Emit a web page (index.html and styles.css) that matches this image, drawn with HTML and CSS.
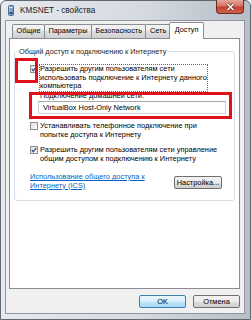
FILE: index.html
```html
<!DOCTYPE html>
<html lang="ru">
<head>
<meta charset="UTF-8">
<title>KMSNET - свойства</title>
<link rel="stylesheet" href="styles.css">
</head>
<body>

<div class="window">
  <div class="titlebar">
    <svg class="app-icon" width="6" height="11" viewBox="0 0 6 11">
      <defs>
        <linearGradient id="ico" x1="0" y1="0" x2="1" y2="0">
          <stop offset="0" stop-color="#9fc3e6"/>
          <stop offset="1" stop-color="#5d8dbd"/>
        </linearGradient>
      </defs>
      <rect x="0.5" y="0.5" width="5" height="10" rx="1" fill="url(#ico)" stroke="#4f6f92"/>
      <rect x="1.5" y="2" width="3" height="1" fill="#e6f2fc"/>
      <rect x="1.5" y="7" width="3" height="2" fill="#2e4f75"/>
    </svg>
    <span class="title">KMSNET - свойства</span>
    <div class="close">
      <svg width="9" height="8" viewBox="0 0 9 8">
        <path d="M1.5 1 L7.5 7 M7.5 1 L1.5 7" stroke="#5a2720" stroke-width="2.8"/>
        <path d="M1.5 1 L7.5 7 M7.5 1 L1.5 7" stroke="#fff" stroke-width="1.6"/>
      </svg>
    </div>
  </div>

  <div class="client">
    <div class="tabs">
      <div class="tab">Общие</div>
      <div class="tab">Параметры</div>
      <div class="tab">Безопасность</div>
      <div class="tab">Сеть</div>
      <div class="tab active">Доступ</div>
    </div>

    <div class="panel">
      <fieldset class="group">
        <legend>Общий доступ к подключению к Интернету</legend>

        <div class="option">
          <span class="checkbox">
            <svg width="6" height="6" viewBox="0 0 6 6"><path d="M0.8 3 L2.3 4.8 L5.3 0.8" fill="none" stroke="#3d4f86" stroke-width="1.3"/></svg>
          </span>
          <span class="option-text focus narrow">Разрешить другим пользователям сети использовать подключение к Интернету данного компьютера</span>
        </div>

        <div class="home-net">
          <div class="field-label">Подключение домашней сети:</div>
          <div class="field">VirtualBox Host-Only Network</div>
        </div>

        <div class="option option-gap">
          <span class="checkbox"></span>
          <span class="option-text">Устанавливать телефонное подключение при попытке доступа к Интернету</span>
        </div>

        <div class="option option-gap-small">
          <span class="checkbox">
            <svg width="6" height="6" viewBox="0 0 6 6"><path d="M0.8 3 L2.3 4.8 L5.3 0.8" fill="none" stroke="#3d4f86" stroke-width="1.3"/></svg>
          </span>
          <span class="option-text">Разрешить другим пользователям сети управление общим доступом к подключению к Интернету</span>
        </div>

        <div class="link-row">
          <a class="link" href="#">Использование общего доступа к Интернету (ICS)</a>
          <button class="btn settings">Настройка...</button>
        </div>
      </fieldset>
    </div>

    <div class="buttons">
      <button class="btn default">OK</button>
      <button class="btn">Отмена</button>
    </div>
  </div>

  <!-- red highlight frames from the screenshot -->
  <div class="mark mark-check"></div>
  <div class="mark mark-field"></div>
</div>

</body>
</html>
```

FILE: styles.css
```css
* {
  box-sizing: border-box;
}
body {
  margin: 0;
  width: 251px;
  height: 320px;
  overflow: hidden;
  font-family: "Liberation Sans", Arial, sans-serif;
  font-size: 7.4px;
  color: #000;
}
.window {
  position: relative;
  width: 251px;
  height: 320px;
  display: flex;
  flex-direction: column;
  padding: 0 5px 5px 4px;
  border: 1px solid #5f666e;
  border-radius: 6px 6px 0 0;
  background: linear-gradient(to right, #e6e9ed, #d6dbe1 55%, #b6bec7);
}
.titlebar {
  height: 19px;
  display: flex;
  align-items: center;
}
.app-icon {
  margin-left: 3px;
  flex: none;
}
.title {
  margin-left: 6px;
  font-size: 8.2px;
  color: #1b1b1b;
}
.close {
  margin-left: auto;
  margin-right: 1px;
  align-self: flex-start;
  margin-top: -1px;
  width: 28px;
  height: 14px;
  display: flex;
  align-items: center;
  justify-content: center;
  border: 1px solid #6b2a22;
  border-top: none;
  border-radius: 0 0 4px 4px;
  background: linear-gradient(#e4a89c, #d47363 45%, #c0412f 55%, #d0614a);
}
.client {
  flex: 1;
  display: flex;
  flex-direction: column;
  padding: 0 4px 0 3px;
  border: 1px solid #8f98a1;
  background: #f0f0f0;
}
.tabs {
  height: 17px;
  display: flex;
  align-items: flex-end;
  padding-left: 3px;
  font-size: 7.3px;
}
.tab {
  height: 14px;
  padding: 0 3.5px;
  margin-right: -1px;
  line-height: 12px;
  border: 1px solid #898c95;
  border-bottom: none;
  border-radius: 2px 2px 0 0;
  background: linear-gradient(#f3f3f3, #ebebeb 50%, #dedede 50%, #d0d0d0);
}
.tab.active {
  position: relative;
  z-index: 1;
  height: 17px;
  margin: 0 0 -1px -1px;
  padding: 0 5px;
  line-height: 14px;
  background: #fff;
}
.panel {
  flex: 1;
  padding: 0 4px;
  background: #fff;
  border: 1px solid #898c95;
}
.group {
  margin: 8px 0 0;
  padding: 8px 12px 10px 15px;
  min-width: 0;
  border: 1px solid #d5dfe5;
  border-radius: 3px;
}
.group legend {
  padding: 0 1px;
  margin-left: -12px;
  line-height: 9px;
  color: #1e1e1e;
}
.option {
  display: flex;
  align-items: flex-start;
  line-height: 8.5px;
}
.option-gap {
  margin-top: 7px;
}
.option-gap-small {
  margin-top: 5px;
}
.checkbox {
  flex: none;
  width: 8px;
  height: 8px;
  margin: 1px 1px 0 0;
  display: flex;
  align-items: center;
  justify-content: center;
  border: 1px solid #8e8f8f;
  background: linear-gradient(135deg, #dedede, #fbfbfb);
}
.option-text {
  border: 1px dotted transparent;
  width: 186px;
}
.option-text.narrow {
  width: 169px;
}
.option-text.focus {
  border-color: #666;
}
.home-net {
  margin-left: 8px;
  line-height: 8.5px;
}
.field-label {
  padding-left: 2px;
}
.field {
  width: 188px;
  height: 13px;
  margin-top: 1px;
  padding-left: 4px;
  line-height: 11px;
  border: 1px solid #c9cfd6;
  border-top-color: #a4a9b1;
}
.link-row {
  display: flex;
  justify-content: space-between;
  align-items: flex-start;
  margin-top: 9px;
  line-height: 8.5px;
}
.link {
  width: 122px;
  color: #0a62c4;
}
.btn {
  height: 13px;
  padding: 0;
  font-family: inherit;
  font-size: inherit;
  line-height: 11px;
  color: #000;
  border: 1px solid #707070;
  border-radius: 2px;
  background: linear-gradient(#f2f2f2, #ebebeb 50%, #dddddd 50%, #cfcfcf);
}
.btn.settings {
  width: 48px;
  margin-top: 3px;
}
.buttons {
  display: flex;
  justify-content: flex-end;
  gap: 7px;
  padding: 6px 0 5px;
}
.buttons .btn {
  width: 47px;
}
.btn.default {
  border-color: #3c7fb1;
  background: linear-gradient(#eaf6fd, #d9f0fc 50%, #bee6fd 50%, #a7d9f5);
}
.mark {
  position: absolute;
  border: 3px solid #e2101b;
}
.mark-check {
  left: 14px;
  top: 57px;
  width: 23px;
  height: 25px;
}
.mark-field {
  left: 28px;
  top: 91px;
  width: 203px;
  height: 27px;
}
```
